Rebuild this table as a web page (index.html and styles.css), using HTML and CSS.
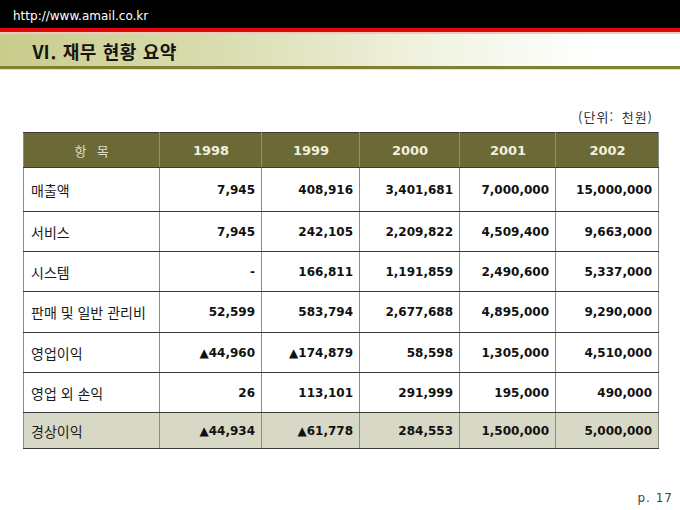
FILE: index.html
```html
<!DOCTYPE html>
<html lang="ko">
<head>
<meta charset="utf-8">
<link rel="stylesheet" href="styles.css">
</head>
<body>
<div class="topbar"><span class="url">http://www.amail.co.kr</span></div>
<div class="redline"></div>
<div class="band"><h1 class="title">Ⅵ. 재무 현황 요약</h1></div>
<div class="olive"></div>
<main class="content">
  <div class="unit">(단위: 천원)</div>
  <table class="fin">
    <colgroup>
      <col class="c0"><col class="c1"><col class="c2"><col class="c3"><col class="c4"><col class="c5">
    </colgroup>
    <thead>
      <tr class="head">
        <th class="lab">항&nbsp;&nbsp;목</th><th>1998</th><th>1999</th><th>2000</th><th>2001</th><th>2002</th>
      </tr>
    </thead>
    <tbody>
      <tr class="r1"><td class="lab">매출액</td><td>7,945</td><td>408,916</td><td>3,401,681</td><td>7,000,000</td><td>15,000,000</td></tr>
      <tr><td class="lab">서비스</td><td>7,945</td><td>242,105</td><td>2,209,822</td><td>4,509,400</td><td>9,663,000</td></tr>
      <tr><td class="lab">시스템</td><td>-</td><td>166,811</td><td>1,191,859</td><td>2,490,600</td><td>5,337,000</td></tr>
      <tr class="r4"><td class="lab">판매 및 일반 관리비</td><td>52,599</td><td>583,794</td><td>2,677,688</td><td>4,895,000</td><td>9,290,000</td></tr>
      <tr><td class="lab">영업이익</td><td>▲44,960</td><td>▲174,879</td><td>58,598</td><td>1,305,000</td><td>4,510,000</td></tr>
      <tr><td class="lab">영업 외 손익</td><td>26</td><td>113,101</td><td>291,999</td><td>195,000</td><td>490,000</td></tr>
      <tr class="total"><td class="lab">경상이익</td><td>▲44,934</td><td>▲61,778</td><td>284,553</td><td>1,500,000</td><td>5,000,000</td></tr>
    </tbody>
  </table>
  <div class="page">p. 17</div>
</main>
</body>
</html>
```
FILE: styles.css
```css
html, body {
  margin: 0;
  padding: 0;
  background: #ffffff;
  width: 680px;
  height: 510px;
  overflow: hidden;
}
body {
  font-family: "DejaVu Sans", "Noto Sans CJK KR", sans-serif;
}
.topbar {
  height: 28px;
  background: #000000;
  display: flex;
  align-items: center;
  padding-left: 13px;
}
.url {
  color: #ffffff;
  font-family: "DejaVu Sans", sans-serif;
  font-size: 12px;
  letter-spacing: 0;
  padding-top: 3px;
}
.redline {
  height: 4px;
  background: #e00a0a;
  border-bottom: 2px solid #f4c8c0;
}
.band {
  height: 32px;
  background: linear-gradient(to right, #c9cc8c 0%, #dcdeb4 35%, #f2f4e4 65%, #ffffff 88%);
  display: flex;
  align-items: center;
  padding-left: 32px;
}
.title {
  margin: 0;
  font-family: "Noto Sans CJK KR", sans-serif;
  font-size: 18px;
  font-weight: 700;
  color: #151515;
  letter-spacing: 0.6px;
  padding-top: 2px;
}
.olive {
  height: 3px;
  background: #7c8232;
  border-bottom: 1px solid #e4e6c0;
}
.content {
  padding: 0 0 0 23px;
  position: relative;
}
.unit {
  width: 634px;
  text-align: right;
  font-family: "Noto Sans CJK KR", sans-serif;
  font-size: 13px;
  color: #333333;
  margin-top: 37px;
  height: 20px;
  line-height: 20px;
  padding-right: 4px;
  box-sizing: border-box;
  letter-spacing: 1px;
  word-spacing: 3px;
}
.fin {
  margin-top: 5px;
  border-collapse: collapse;
  table-layout: fixed;
  width: 635px;
}
.c0 { width: 136px; }
.c1 { width: 102px; }
.c2 { width: 98px; }
.c3 { width: 100px; }
.c4 { width: 96px; }
.c5 { width: 103px; }
.fin th, .fin td {
  border-left: 1px solid #8c8c8c;
  border-right: 1px solid #8c8c8c;
  border-top: 1px solid #3a3a3a;
  border-bottom: 1px solid #3a3a3a;
  padding: 0 6px 0 7px;
  white-space: nowrap;
}
.fin th {
  background: #6b6936;
  color: #f2f0dc;
  font-family: "DejaVu Sans", sans-serif;
  font-weight: 700;
  font-size: 13px;
  text-align: center;
  height: 33px;
  padding-top: 1px;
}
.fin th.lab {
  font-family: "Noto Sans CJK KR", sans-serif;
  font-weight: 400;
  font-size: 13px;
  color: #dcdccc;
  letter-spacing: 1px;
}
.fin td {
  text-align: right;
  font-family: "DejaVu Sans", sans-serif;
  font-weight: 700;
  font-size: 12px;
  color: #111111;
  height: 39px;
}
.fin td.lab {
  text-align: left;
  font-family: "Noto Sans CJK KR", sans-serif;
  font-weight: 400;
  font-size: 14px;
  color: #1a1a1a;
}
.fin tr.r1 td { height: 43px; }
.fin tr.r4 td { height: 40px; }
.fin tr.total td {
  background: #d8d8c6;
  height: 35px;
}
.page {
  position: absolute;
  right: 7px;
  top: 384px;
  font-family: "DejaVu Sans", sans-serif;
  font-size: 12px;
  color: #444444;
  letter-spacing: 1px;
}
```
